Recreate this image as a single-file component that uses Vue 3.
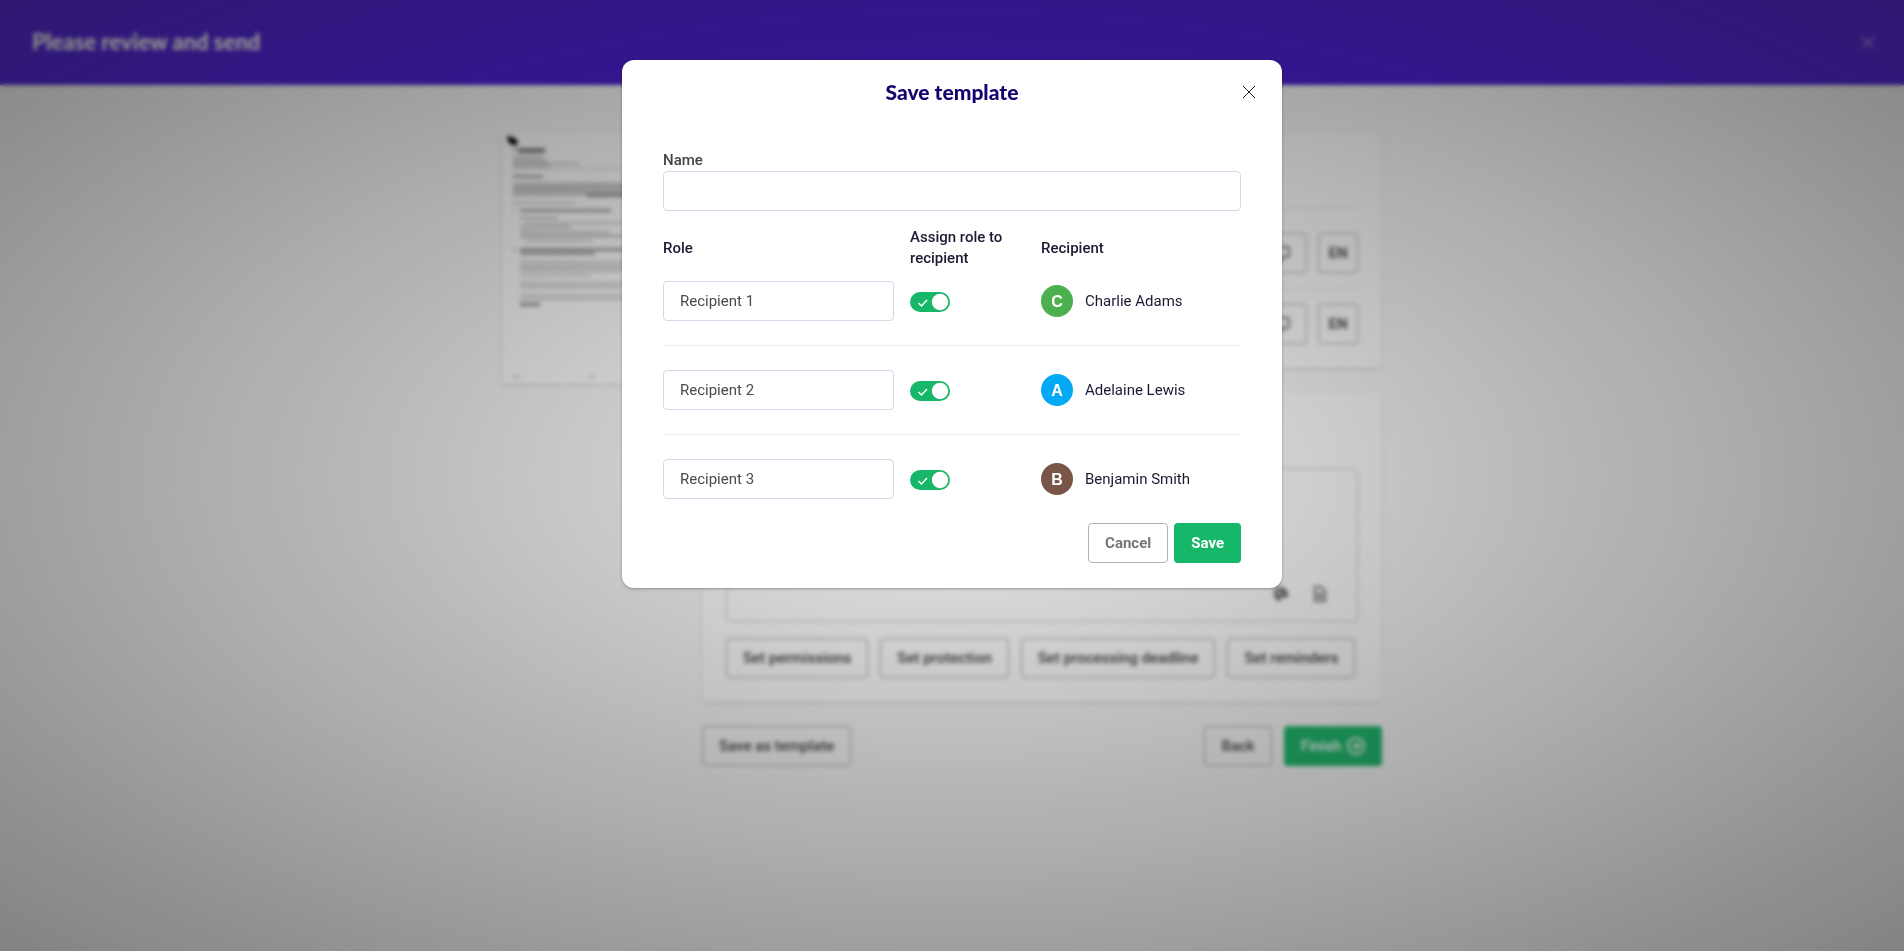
<script setup>
import { ref } from 'vue'

const templateName = ref('')

const rows = ref([
  { role: 'Recipient 1', assigned: true, name: 'Charlie Adams', initial: 'C', tone: 'green' },
  { role: 'Recipient 2', assigned: true, name: 'Adelaine Lewis', initial: 'A', tone: 'blue' },
  { role: 'Recipient 3', assigned: true, name: 'Benjamin Smith', initial: 'B', tone: 'brown' },
])

const options = ['Set permissions', 'Set protection', 'Set processing deadline', 'Set reminders']

// Text lines of the page thumbnail: x, y, width, height, opacity
const lines = [
  [11, 15, 4, 2, 0.5], [16, 15, 27, 5, 0.5],
  [11, 23, 31, 1, 0.35], [11, 25, 31, 1, 0.35], [11, 28, 34, 1, 0.45], [11, 30, 66, 1, 0.45], [11, 33, 38, 1, 0.45],
  [11, 35, 150, 1, 0.2],
  [11, 42, 30, 3, 0.35],
  [11, 50, 140, 2, 0.3], [11, 53, 146, 2, 0.32], [11, 56, 144, 2, 0.32], [11, 59, 148, 2, 0.3], [11, 62, 70, 1, 0.3], [84, 61, 60, 3, 0.4],
  [11, 69, 62, 2, 0.2],
  [11, 76, 2, 2, 0.25], [18, 76, 91, 3, 0.36],
  [18, 84, 38, 2, 0.28], [23, 89, 120, 2, 0.22], [18, 93, 51, 2, 0.28], [18, 98, 89, 2, 0.26],
  [18, 102, 130, 2, 0.32], [23, 107, 68, 2, 0.22],
  [11, 115, 2, 3, 0.3], [18, 115, 136, 3, 0.4], [18, 119, 75, 3, 0.36],
  [18, 128, 140, 1, 0.35], [18, 131, 142, 1, 0.35], [18, 134, 138, 2, 0.26], [18, 138, 140, 1, 0.35], [18, 142, 70, 1, 0.35],
  [18, 149, 136, 2, 0.22], [18, 153, 138, 2, 0.24],
  [18, 161, 134, 2, 0.2], [18, 165, 140, 2, 0.22], [18, 170, 20, 3, 0.45],
  [11, 243, 7, 2, 0.22], [86, 243, 7, 2, 0.22],
]
</script>

<template>
  <div class="page">
    <header class="topbar">
      <h1>Please review and send</h1>
      <button class="icon-btn" aria-label="Close">
        <svg width="14" height="14" viewBox="0 0 14 14"><path d="M1 1 13 13M13 1 1 13" stroke="currentColor" stroke-width="1" /></svg>
      </button>
    </header>

    <main class="content">
      <section class="sheet">
        <svg width="176" height="251" viewBox="0 0 176 251">
          <path d="M5 3 11 4 16 8 15 12 10 12 6 9z" fill="#000" />
          <rect v-for="(l, i) in lines" :key="i" :x="l[0]" :y="l[1]" :width="l[2]" :height="l[3]" :fill-opacity="l[4]" />
        </svg>
      </section>

      <div class="column">
        <section class="card people">
          <div v-for="n in 2" :key="n" class="person">
            <button class="square message-btn" aria-label="Message">
              <svg width="16" height="16" viewBox="0 0 16 16"><path d="M3 2H13Q15 2 15 4V10Q15 12 13 12H10L7 15V12H3Q1 12 1 10V4Q1 2 3 2z" fill="none" stroke="currentColor" stroke-width="2" /></svg>
            </button>
            <button class="square">EN</button>
          </div>
        </section>

        <section class="card message">
          <div class="editor">
            <svg width="16" height="16" viewBox="0 0 16 16"><path d="M8 1C3 1 0 4 1 9Q2 15 7 15L9 11 13 12Q16 11 15 7 13 1 8 1z" fill="currentColor" /><circle cx="6" cy="7" r="2" fill="#ddd" /></svg>
            <svg width="14" height="16" viewBox="0 0 14 16"><path d="M2 1H8L12 5V15H2z" fill="none" stroke="currentColor" stroke-width="2" /><path d="M4 8H10M4 11H10" stroke="currentColor" stroke-width="2" /></svg>
          </div>
          <div class="options">
            <button v-for="o in options" :key="o" class="btn outline">{{ o }}</button>
          </div>
        </section>

        <footer class="actions">
          <button class="btn outline">Save as template</button>
          <span class="spacer"></span>
          <button class="btn outline">Back</button>
          <button class="btn primary">
            Finish
            <svg width="18" height="18" viewBox="0 0 18 18" fill="none" stroke="currentColor"><circle cx="9" cy="9" r="8" stroke-width="2" /><path d="M5 9H12M9 6 12 9 9 12" stroke-width="2" /></svg>
          </button>
        </footer>
      </div>
    </main>
  </div>

  <div class="overlay">
    <div class="dialog" role="dialog" aria-modal="true" aria-labelledby="dialog-title">
      <div class="dialog-head">
        <h2 id="dialog-title">Save template</h2>
        <button class="icon-btn" aria-label="Close dialog">
          <svg width="14" height="14" viewBox="0 0 14 14"><path d="M1 1 13 13M13 1 1 13" stroke="currentColor" stroke-width="1" /></svg>
        </button>
      </div>

      <form class="dialog-body" @submit.prevent>
        <label class="field-label" for="template-name">Name</label>
        <input id="template-name" v-model="templateName" class="text-input" type="text" />

        <table class="roles">
          <thead>
            <tr>
              <th class="col-role" scope="col">Role</th>
              <th class="col-assign" scope="col">Assign role to recipient</th>
              <th scope="col">Recipient</th>
            </tr>
          </thead>
          <tbody>
            <tr v-for="row in rows" :key="row.name">
              <td class="col-role"><input v-model="row.role" class="text-input" type="text" :aria-label="'Role of ' + row.name" /></td>
              <td>
                <label class="switch">
                  <input v-model="row.assigned" type="checkbox" :aria-label="'Assign role to ' + row.name" />
                  <svg width="40" height="20" viewBox="0 0 40 20">
                    <path d="M8.500 11 11.500 14 17 8" fill="none" stroke="#fff" stroke-width="1.500" />
                    <circle cx="30" cy="10" r="8.200" fill="#fff" />
                  </svg>
                </label>
              </td>
              <td>
                <div class="recipient">
                  <span class="avatar" :class="row.tone">{{ row.initial }}</span>
                  <span>{{ row.name }}</span>
                </div>
              </td>
            </tr>
          </tbody>
        </table>

        <div class="dialog-actions">
          <button class="btn outline" type="button">Cancel</button>
          <button class="btn primary" type="submit">Save</button>
        </div>
      </form>
    </div>
  </div>
</template>

<style>
body {
  margin: 0;
  background: #fafafa;
}
</style>

<style scoped>
.page,
.overlay {
  font-family: Roboto, "Liberation Sans", sans-serif;
  font-size: 15px;
  line-height: 21px;
  color: #1c1a33;
  box-sizing: border-box;
}
.page *,
.overlay * {
  box-sizing: border-box;
}
.page {
  min-height: 100vh;
}
button,
input {
  font: inherit;
  color: inherit;
}
button {
  cursor: pointer;
}
svg {
  display: block;
}
h1,
h2 {
  margin: 0;
  font-family: Lato, "Liberation Sans", sans-serif;
  font-weight: 900;
  font-size: 21px;
  line-height: 24px;
}
h1 {
  font-size: 22px;
}
.topbar {
  display: flex;
  align-items: center;
  justify-content: space-between;
  height: 85px;
  padding: 0 24px 2px 32px;
  background: #4010d4;
  color: #fff;
}
.icon-btn {
  display: grid;
  place-items: center;
  width: 24px;
  height: 24px;
  padding: 0;
  border: 0;
  background: none;
}
.content {
  display: flex;
  align-items: flex-start;
  gap: 24px;
  max-width: 900px;
  box-sizing: border-box;
  margin: 48px auto 0;
  padding-right: 20px;
}
.sheet {
  flex: none;
  background: #fff;
  box-shadow: 0 1px 3px rgba(0, 0, 0, 0.2);
}
.column {
  flex: 1;
}
.card {
  background: #fff;
  border-radius: 3px;
  box-shadow: 0 1px 3px rgba(0, 0, 0, 0.2);
  padding: 0 24px 24px;
}
.people {
  padding-top: 74px;
}
.person {
  display: flex;
  justify-content: flex-end;
  gap: 11px;
  padding: 25px 0 15px;
  border-top: 1px solid #e9e9ee;
}
.person + .person {
  padding: 15px 0 0;
}
.square {
  width: 40px;
  height: 40px;
  padding: 0;
  display: grid;
  place-items: center;
  border: 1px solid #a6a6a6;
  border-radius: 4px;
  background: none;
  color: #555;
  font-weight: 700;
}
.message-btn {
  width: 50px;
  color: #777;
}
.message {
  margin-top: 24px;
  padding-top: 76px;
}
.editor {
  display: flex;
  align-items: flex-end;
  justify-content: flex-end;
  gap: 24px;
  height: 154px;
  padding: 0 30px 19px;
  border: 1px solid #c4c2da;
  border-radius: 4px;
  color: #707070;
}
.options {
  display: flex;
  gap: 12px;
  margin-top: 16px;
}
.btn {
  display: inline-flex;
  align-items: center;
  gap: 6px;
  height: 40px;
  padding: 0 16px;
  border: 1px solid transparent;
  border-radius: 4px;
  font-weight: 700;
  white-space: nowrap;
}
.outline {
  border-color: #b4b4b4;
  background: #fff;
  color: #757575;
}
.page .btn {
  font-weight: 500;
}
.page .outline {
  border-color: #9c9c9c;
  background: none;
  color: #444;
}
.primary {
  background: #16b768;
  color: #fff;
}
.actions {
  display: flex;
  gap: 12px;
  margin-top: 24px;
}
.spacer {
  flex: 1;
}
.overlay {
  position: fixed;
  inset: 0;
  display: flex;
  justify-content: center;
  align-items: flex-start;
  padding-top: 60px;
  background: radial-gradient(rgba(32, 32, 32, 0.1), rgba(32, 32, 32, 0.55));
  backdrop-filter: blur(2px);
}
.dialog {
  width: 660px;
  background: #fff;
  border-radius: 12px;
  box-shadow: 0 1px 3px rgba(0, 0, 0, 0.3);
}
.dialog-head {
  display: grid;
  grid-template-columns: 1fr auto 1fr;
  align-items: center;
  padding: 20px 21px;
}
.dialog-head h2 {
  grid-column: 2;
  color: #16046e;
}
.dialog-head .icon-btn {
  justify-self: end;
}
.dialog-body {
  padding: 25px 41px;
}
.field-label {
  display: block;
  line-height: 22px;
  font-weight: 500;
  color: #444;
}
.text-input {
  display: block;
  width: 100%;
  height: 40px;
  padding: 0 16px;
  border: 1px solid #d8d6e8;
  border-radius: 4px;
  background: #fff;
  color: #4a4a4a;
  outline: none;
}
.roles {
  width: 100%;
  margin-top: 16px;
  border-collapse: collapse;
  table-layout: fixed;
}
.roles th,
.roles td {
  padding: 24px 0;
  text-align: left;
  vertical-align: middle;
  font-weight: 400;
}
.roles th {
  padding: 0 16px 0 0;
  font-weight: 500;
}
.roles .col-role {
  width: 247px;
  padding-right: 16px;
}
.roles .col-assign {
  width: 131px;
}
.roles tbody tr:first-child td {
  padding-top: 12px;
}
.roles tbody tr:last-child td {
  padding-bottom: 24px;
}
.roles tbody tr + tr td {
  border-top: 1px solid #ececec;
}
.switch {
  display: inline-grid;
  vertical-align: middle;
}
.switch > * {
  grid-area: 1 / 1;
}
.switch input {
  appearance: none;
  width: 40px;
  height: 20px;
  margin: 0;
  border-radius: 10px;
  background: #16b768;
}
.switch svg {
  z-index: 1;
  pointer-events: none;
}
.recipient {
  display: flex;
  align-items: center;
  gap: 12px;
}
.avatar {
  display: grid;
  place-items: center;
  width: 32px;
  height: 32px;
  border-radius: 50%;
  color: #fff;
  font-family: "Liberation Sans", sans-serif;
  font-size: 16px;
  font-weight: 700;
}
.green {
  background: #4caf50;
}
.blue {
  background: #03a9f4;
}
.brown {
  background: #795548;
}
.dialog-actions {
  display: flex;
  justify-content: flex-end;
  gap: 6px;
}
</style>
